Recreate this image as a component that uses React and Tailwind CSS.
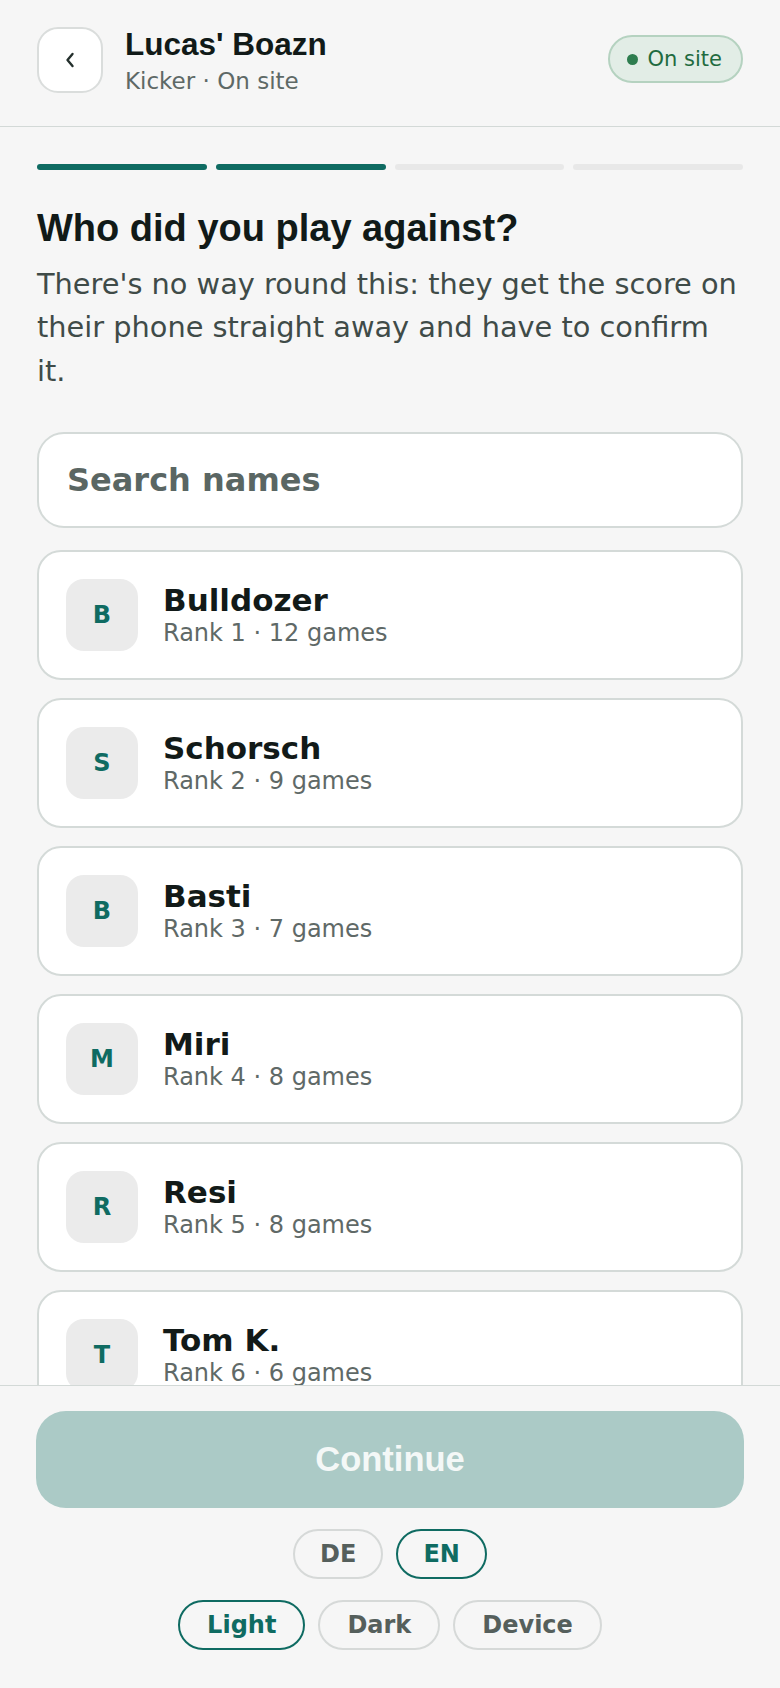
import React, { useState } from 'react';

const PLAYERS = [
  { name: 'Bulldozer', rank: 1, games: 12 },
  { name: 'Schorsch', rank: 2, games: 9 },
  { name: 'Basti', rank: 3, games: 7 },
  { name: 'Miri', rank: 4, games: 8 },
  { name: 'Resi', rank: 5, games: 8 },
  { name: 'Tom K.', rank: 6, games: 6 },
  { name: 'Vroni', rank: 7, games: 5 },
];

const HEAD = { fontFamily: '"Liberation Sans", Arial, sans-serif' };

const Pill = ({ active, wide, children, onClick }) => (
  <button
    onClick={onClick}
    className={`h-[50px] rounded-full border-2 text-[24px] font-bold leading-none ${wide ? 'px-[27px]' : 'px-[25px]'} ${
      active ? 'border-[#0f6b62] text-[#0f6b62]' : 'border-[#d6d9d8] text-[#555f5c]'
    }`}
  >
    {children}
  </button>
);

const App = () => {
  const [query, setQuery] = useState('');
  const [lang, setLang] = useState('EN');
  const [theme, setTheme] = useState('Light');

  const list = PLAYERS.filter(p => p.name.toLowerCase().includes(query.toLowerCase()));

  return (
    <div className="h-[1688px] flex flex-col bg-[#f6f6f6] overflow-hidden" style={{ fontFamily: '"DejaVu Sans", sans-serif' }}>
      {/* Header */}
      <header className="flex items-start px-[37px] pt-[26px] pb-[28px] border-b border-[#d3d9d7]">
        <button className="mt-[1px] w-[66px] h-[66px] rounded-[21px] bg-white border-2 border-[#dadddc] flex items-center justify-center shrink-0">
          <svg width="12" height="16" viewBox="0 0 12 16" fill="none">
            <path d="M8.5 2 L3.5 8 L8.5 14" stroke="#24302d" strokeWidth="2.4" strokeLinecap="round" strokeLinejoin="round" />
          </svg>
        </button>
        <div className="ml-[22px] flex-1">
          <h1 className="text-[31.5px] leading-[36px] font-bold text-[#111a18]" style={HEAD}>Lucas' Boazn</h1>
          <p className="mt-[4px] text-[23px] leading-[31.5px] text-[#5e6966]">Kicker · On site</p>
        </div>
        <div className="mt-[9px] h-[48px] pl-[17px] pr-[19px] rounded-full bg-[#e2ede6] border-2 border-[#b5d2c0] flex items-center gap-[10px]">
          <span className="w-[11px] h-[11px] rounded-full bg-[#2e7d4f]" />
          <span className="text-[21px] text-[#1f6b40] leading-none">On site</span>
        </div>
      </header>

      {/* Main */}
      <main className="flex-1 overflow-hidden px-[37px] pt-[37px]">
        <div className="grid grid-cols-4 gap-[9px]">
          {[true, true, false, false].map((on, i) => (
            <div key={i} className={`h-[6px] rounded-full ${on ? 'bg-[#0f6b62]' : 'bg-[#e8e8e8]'}`} />
          ))}
        </div>

        <h2 className="mt-[36px] text-[38px] leading-[45px] font-bold text-[#111a18]" style={HEAD}>
          Who did you play against?
        </h2>
        <p className="mt-[12px] text-[28.8px] leading-[43.5px] text-[#3f4b48]">
          There's no way round this: they get the score on their phone straight away and have to confirm it.
        </p>

        <input
          value={query}
          onChange={e => setQuery(e.target.value)}
          placeholder="Search names"
          className="mt-[39px] w-full h-[96px] rounded-[27px] bg-white border-2 border-[#d4dad8] px-[28px] text-[32px] font-bold text-[#1a2220] placeholder-[#5a6663] focus:outline-none"
        />

        <div className="mt-[22px] flex flex-col gap-[18px]">
          {list.map(p => (
            <div key={p.name} className="shrink-0 h-[130px] bg-white rounded-[24px] border-2 border-[#d4dad8] px-[27px] flex items-center">
              <div className="w-[72px] h-[72px] rounded-[18px] bg-[#ebebeb] flex items-center justify-center text-[24px] font-bold text-[#0f6b62] shrink-0">
                {p.name[0]}
              </div>
              <div className="ml-[25px]">
                <p className="text-[31px] leading-[36px] font-bold text-[#121a18]">{p.name}</p>
                <p className="text-[24px] leading-[31px] text-[#5f6967]">Rank {p.rank} · {p.games} games</p>
              </div>
            </div>
          ))}
        </div>
      </main>

      {/* Footer */}
      <footer className="border-t border-[#d3d9d7] bg-[#f6f6f6] px-[36px] pt-[25px] pb-[38px] flex flex-col items-center">
        <button disabled className="w-full h-[97px] rounded-[30px] bg-[#abcac6] text-[#f4f8f7] text-[34.5px] font-bold" style={HEAD}>
          Continue
        </button>
        <div className="mt-[21px] flex gap-[13px]">
          {['DE', 'EN'].map(l => (
            <Pill key={l} active={lang === l} onClick={() => setLang(l)}>{l}</Pill>
          ))}
        </div>
        <div className="mt-[21px] flex gap-[13px]">
          {['Light', 'Dark', 'Device'].map(t => (
            <Pill key={t} wide active={theme === t} onClick={() => setTheme(t)}>{t}</Pill>
          ))}
        </div>
      </footer>
    </div>
  );
};

export default App;
